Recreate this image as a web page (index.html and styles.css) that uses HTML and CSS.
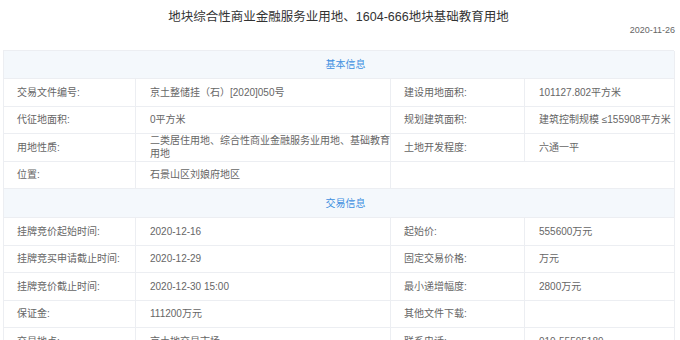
FILE: index.html
```html
<!DOCTYPE html>
<html lang="zh-CN">
<head>
<meta charset="utf-8">
<title>地块信息</title>
<link rel="stylesheet" href="styles.css">
</head>
<body>
<div class="page">
  <h1 class="title">地块综合性商业金融服务业用地、1604-666地块基础教育用地</h1>
  <div class="date">2020-11-26</div>
  <div class="info">
    <div class="sec">基本信息</div>
    <div class="cell lab">交易文件编号:</div>
    <div class="cell val">京土整储挂（石）[2020]050号</div>
    <div class="cell lab">建设用地面积:</div>
    <div class="cell val">101127.802平方米</div>

    <div class="cell lab">代征地面积:</div>
    <div class="cell val">0平方米</div>
    <div class="cell lab">规划建筑面积:</div>
    <div class="cell val">建筑控制规模 ≤155908平方米</div>

    <div class="cell lab">用地性质:</div>
    <div class="cell val">二类居住用地、综合性商业金融服务业用地、基础教育用地</div>
    <div class="cell lab">土地开发程度:</div>
    <div class="cell val">六通一平</div>

    <div class="cell lab">位置:</div>
    <div class="cell val">石景山区刘娘府地区</div>
    <div class="cell wide"></div>

    <div class="sec">交易信息</div>
    <div class="cell lab">挂牌竞价起始时间:</div>
    <div class="cell val">2020-12-16</div>
    <div class="cell lab">起始价:</div>
    <div class="cell val">555600万元</div>

    <div class="cell lab">挂牌竞买申请截止时间:</div>
    <div class="cell val">2020-12-29</div>
    <div class="cell lab">固定交易价格:</div>
    <div class="cell val">万元</div>

    <div class="cell lab">挂牌竞价截止时间:</div>
    <div class="cell val">2020-12-30 15:00</div>
    <div class="cell lab">最小递增幅度:</div>
    <div class="cell val">2800万元</div>

    <div class="cell lab">保证金:</div>
    <div class="cell val">111200万元</div>
    <div class="cell lab">其他文件下载:</div>
    <div class="cell val"></div>

    <div class="cell lab">交易地点:</div>
    <div class="cell val">京土地交易市场</div>
    <div class="cell lab">联系电话:</div>
    <div class="cell val">010-55595189</div>
  </div>
</div>
</body>
</html>
```
FILE: styles.css
```css
html, body {
  margin: 0;
  padding: 0;
  background: #ffffff;
  overflow: hidden;
}

body {
  font-family: "Liberation Sans", "Noto Sans CJK SC", sans-serif;
  color: #666666;
}

.page {
  width: 671px;
  margin-left: 3px;
  padding-top: 8px;
}

.title {
  margin: 0;
  font-size: 12.5px;
  font-weight: normal;
  line-height: 18px;
  color: #333333;
  text-align: center;
}

.date {
  font-size: 9px;
  line-height: 8px;
  color: #666666;
  text-align: right;
  margin-right: -1px;
}

.info {
  margin-top: 16px;
  display: grid;
  grid-template-columns: 132px 255px 134px 150px;
  grid-template-rows: 28px repeat(4, 27.5px) 29px repeat(5, 27.5px);
  border-top: 1px solid #eceef2;
  border-left: 1px solid #eceef2;
  font-size: 10px;
  line-height: 13px;
}

.cell {
  box-sizing: border-box;
  display: flex;
  align-items: center;
  padding: 0 0 0 13px;
  border-right: 1px solid #eceef2;
  border-bottom: 1px solid #eceef2;
  color: #666666;
}

.val {
  padding-left: 14px;
}

.info > .val:nth-child(5n+3) {
  padding-left: 14px;
}

.wide {
  grid-column: span 2;
}

.sec {
  grid-column: 1 / -1;
  box-sizing: border-box;
  display: flex;
  align-items: center;
  justify-content: center;
  padding-left: 13px;
  background: #f4f8fc;
  color: #3d8fe0;
  border-right: 1px solid #eceef2;
  border-bottom: 1px solid #eceef2;
}
```
